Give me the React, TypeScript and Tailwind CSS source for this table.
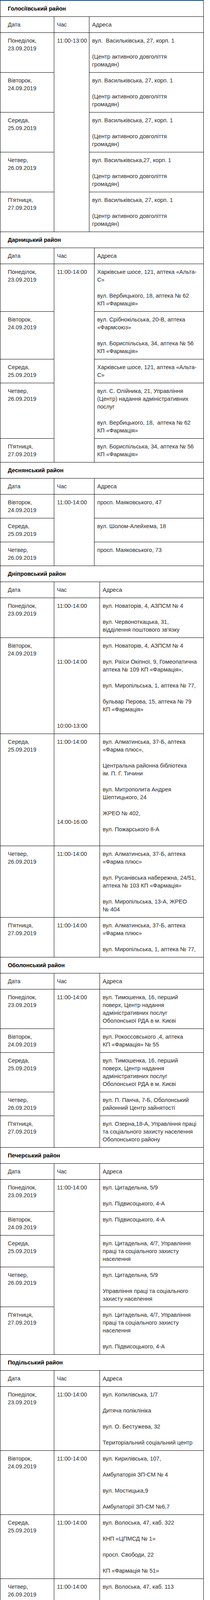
import { Fragment } from "react"

type Row = {
  date: string
  time?: string[]
  addr: string[]
  extra?: boolean
}

type District = {
  name: string
  cols: string
  span?: { rows: number; items: string[] }
  rows: Row[]
}

const MON = "Понеділок,\n23.09.2019"
const TUE = "Вівторок,\n24.09.2019"
const WED = "Середа,\n25.09.2019"
const THU = "Четвер,\n26.09.2019"
const FRI = "П'ятниця,\n27.09.2019"

const WIDE = "grid-cols-[139px_117px_266px]"

const centre = "(Центр активного довголіття\nгромадян)"

const districts: District[] = [
  {
    name: "Голосіївський район",
    cols: "grid-cols-[139px_90px_293px]",
    span: { rows: 5, items: ["11:00-13:00"] },
    rows: [
      { date: MON, addr: ["вул.  Васильківська, 27, корп. 1", centre] },
      { date: TUE, addr: ["вул. Васильківська, 27, корп. 1", centre] },
      { date: WED, addr: ["вул. Васильківська, 27, корп. 1", centre] },
      { date: THU, addr: ["вул. Васильківська,27, корп. 1", centre] },
      { date: FRI, addr: ["вул. Васильківська, 27, корп. 1", centre] },
    ],
  },
  {
    name: "Дарницький район",
    cols: "grid-cols-[139px_103px_280px]",
    span: { rows: 5, items: ["11:00-14:00"] },
    rows: [
      {
        date: MON,
        addr: ["Харківське шосе, 121, аптека «Альта-\nС»", "вул. Вербицького, 18, аптека № 62\nКП «Фармація»"],
      },
      {
        date: TUE,
        addr: ["вул. Срібнокільська, 20-В, аптека\n«Фармсоюз»", "вул. Бориспільська, 34, аптека № 56\nКП «Фармація»"],
      },
      { date: WED, addr: ["Харківське шосе, 121, аптека «Альта-\nС»"] },
      {
        date: THU,
        addr: [
          "вул. С. Олійника, 21, Управління\n(Центр) надання адміністративних\nпослуг",
          "вул. Вербицького, 18,  аптека № 62\nКП «Фармація»",
        ],
      },
      { date: FRI, addr: ["вул. Бориспільська, 34, аптека № 56\nКП «Фармація»"] },
    ],
  },
  {
    name: "Деснянський район",
    cols: "grid-cols-[139px_103px_280px]",
    span: { rows: 3, items: ["11:00-14:00"] },
    rows: [
      { date: TUE, addr: ["просп. Маяковського, 47"] },
      { date: WED, addr: ["вул. Шолом-Алейхема, 18"] },
      { date: THU, addr: ["просп. Маяковського, 73"] },
    ],
  },
  {
    name: "Дніпровський район",
    cols: WIDE,
    rows: [
      {
        date: MON,
        time: ["11:00-14:00"],
        addr: ["вул. Новаторів, 4, АЗПСМ № 4", "вул. Червоноткацька, 31,\nвідділення поштового зв'язку"],
      },
      {
        date: TUE,
        time: ["", "11:00-14:00", "", "", "", "10:00-13:00"],
        addr: [
          "вул. Новаторів, 4, АЗПСМ № 4",
          "вул. Раїси Окіпної, 9, Гомеопатична\nаптека № 109 КП «Фармація»,",
          "вул. Миропільська, 1, аптека № 77,",
          "бульвар Перова, 15, аптека № 79\nКП «Фармація»",
        ],
      },
      {
        date: WED,
        time: ["11:00-14:00", "", "", "", "", "14:00-16:00"],
        extra: true,
        addr: [
          "вул. Алматинська, 37-Б, аптека\n«Фарма плюс»,",
          "Центральна районна бібліотека\nім. П. Г. Тичини",
          "вул. Митрополита Андрея\nШептицького, 24",
          "ЖРЕО № 402,",
          "вул. Пожарського 8-А",
        ],
      },
      {
        date: THU,
        time: ["11:00-14:00"],
        addr: [
          "вул. Алматинська, 37-Б, аптека\n«Фарма плюс»",
          "вул. Русанівська набережна, 24/51,\nаптека № 103 КП «Фармація»",
          "вул. Миропільська, 13-А, ЖРЕО\n№ 404",
        ],
      },
      {
        date: FRI,
        time: ["11:00-14:00"],
        addr: ["вул. Алматинська, 37-Б, аптека\n«Фарма плюс»", "вул. Миропільська, 1, аптека № 77,"],
      },
    ],
  },
  {
    name: "Оболонський район",
    cols: WIDE,
    span: { rows: 5, items: ["11:00-14:00"] },
    rows: [
      {
        date: MON,
        addr: ["вул. Тимошенка, 16, перший\nповерх, Центр надання\nадміністративних послуг\nОболонської РДА в м. Києві"],
      },
      { date: TUE, addr: ["вул. Рокоссовського ,4, аптека\nКП «Фармація» № 55"] },
      {
        date: WED,
        addr: ["вул. Тимошенка, 16, перший\nповерх, Центр надання\nадміністративних послуг\nОболонської РДА в м. Києві"],
      },
      { date: THU, addr: ["вул. П. Панча, 7-Б, Оболонський\nрайонний Центр зайнятості"] },
      {
        date: FRI,
        addr: ["вул. Озерна,18-А, Управління праці\nта соціального захисту населення\nОболонського району"],
      },
    ],
  },
  {
    name: "Печерський район",
    cols: WIDE,
    span: { rows: 5, items: ["11:00-14:00"] },
    rows: [
      { date: MON, addr: ["вул. Цитадельна, 5/9", "вул. Підвисоцького, 4-А"] },
      { date: TUE, addr: ["вул. Підвисоцького, 4-А"] },
      { date: WED, addr: ["вул. Цитадельна, 4/7, Управління\nпраці та соціального захисту\nнаселення"] },
      { date: THU, addr: ["вул. Цитадельна, 5/9", "Управління праці та соціального\nзахисту населення"] },
      {
        date: FRI,
        addr: ["вул. Цитадельна, 4/7, Управління\nпраці та соціального захисту\nнаселення", "вул. Підвисоцького, 4-А"],
      },
    ],
  },
  {
    name: "Подільський район",
    cols: WIDE,
    rows: [
      {
        date: MON,
        time: ["11:00-14:00"],
        addr: ["вул. Копилівська, 1/7", "Дитяча поліклініка", "вул. О. Бестужева, 32", "Територіальний соціальний центр"],
      },
      {
        date: TUE,
        time: ["11:00-14:00"],
        addr: ["вул. Кирилівська, 107,", "Амбулаторія ЗП-СМ № 4", "вул. Мостицька,9", "Амбулаторії ЗП-СМ №6,7"],
      },
      {
        date: WED,
        time: ["11:00-14:00"],
        addr: ["вул. Волоська, 47, каб. 322", "КНП «ЦПМСД № 1»", "просп. Свободи, 22", "КП «Фармація № 51»"],
      },
      {
        date: THU,
        time: ["11:00-14:00"],
        addr: ["вул. Волоська, 47, каб. 113", "просп. Свободи, 22", "КП «Фармація № 51»"],
      },
      {
        date: FRI,
        time: ["11:00-14:00"],
        addr: ["вул. Мостицька, 9, каб. 250", "вул. Полкова,57, АЗП-СМ № 1"],
      },
    ],
  },
  {
    name: "Святошинський район",
    cols: WIDE,
    span: { rows: 3, items: ["", "09:00-12:00", "", "11:00-14:00", "", "09:00-12:00", "11:00-14:00"] },
    rows: [
      { date: MON, addr: ["просп. Перемоги, 97", "просп. Перемоги, 148/1, аптека\n№ 78 КП «Фармація»"] },
      { date: WED, addr: ["просп. Перемоги, 97", "просп. Перемоги, 148/1, аптека\n№ 78 КП «Фармація»"] },
      { date: FRI, addr: ["просп. Перемоги, 97", "просп. Перемоги, 148/1, Аптека\n№78 КП «Фармація»"] },
    ],
  },
  {
    name: "Солом’янський район",
    cols: WIDE,
    span: { rows: 5, items: ["11:00-14:00"] },
    rows: [
      {
        date: MON,
        addr: ["просп. Повітрофлотський, 41,\nСолом'янська РДА", "просп. Комарова, 3, Медмістечко,"],
      },
      {
        date: TUE,
        addr: [
          "просп. Повітрофлотський, 40,\nУправління праці та соціального\nзахисту Солом'янської РДА",
          "вул. Гавела, 83-А, Територіальний\nцентр соціального\nобслуговування Солом'янського\nрайону",
        ],
      },
      {
        date: WED,
        addr: ["вул. Липківського, 27/5, аптека КП\n№ 17,", "просп. Перемоги, 45, аптека КП\n№ 36"],
      },
      { date: THU, addr: ["вул. Солом'янська, 17", "просп. Комарова, 3, Медмістечко"] },
      {
        date: FRI,
        addr: ["просп. Повітрофлотський, 41,\nСолом'янська районна в місті\nКиєві державна адміністрація"],
      },
    ],
  },
  {
    name: "Шевченківський район",
    cols: WIDE,
    rows: [
      {
        date: MON,
        time: ["10:00-13:00"],
        addr: ["вул. Щусєва 2/19 (аптека № 121\nКП «Фармація)", "КНП ЦПМСД № 3"],
      },
      {
        date: TUE,
        time: ["10:00-13:00"],
        addr: [
          "вул. Б. Хмельницького, 24",
          "(Шевченківська районна в місті\nКиєві державна адміністрація),\nКНП ЦПМСД № 1",
        ],
      },
      {
        date: WED,
        time: ["10:00-13:00"],
        addr: ["вул. Січових Стрільців, 10, аптека\n№ 7 КП «Фармація»", "КНП ЦПМСД № 2"],
      },
      {
        date: THU,
        time: ["10:00-13:00"],
        addr: ["вул. Б. Хмельницького, 24,\nШевченківська РДА), КНП ЦПМСД\n№ 3"],
      },
      {
        date: FRI,
        time: ["10:00-13:00"],
        addr: ["вул. Ісаакяна, 2 (аптека № 90\nКП «Фармація)", "КНП ЦПМСД № 1"],
      },
    ],
  },
]

const spanClass: Record<number, string> = {
  3: "row-span-3",
  5: "row-span-5",
}

// one paragraph per item; line breaks are explicit so wrapping matches the page
function Lines({ items }: { items: string[] }) {
  return (
    <div className="flex flex-col gap-[21px]">
      {items.map((t, i) => (
        <p key={i} className="min-h-[20px] whitespace-pre text-[14.6px] leading-[20px]">
          {t}
        </p>
      ))}
    </div>
  )
}

const first = "border-l border-r border-b border-black pl-[19px] py-[10px]"
const cell = "border-r border-b border-black pl-[7px] py-[10px]"

function DistrictTable({ d }: { d: District }) {
  return (
    <div className={`grid ${d.cols}`}>
      <div className={`col-span-3 font-bold text-black ${first}`}>
        <Lines items={[d.name]} />
      </div>
      <div className={first}>
        <Lines items={["Дата"]} />
      </div>
      <div className={cell}>
        <Lines items={["Час"]} />
      </div>
      <div className={cell}>
        <Lines items={["Адреса"]} />
      </div>
      {d.rows.map((r, i) => (
        <Fragment key={i}>
          <div className={first}>
            <Lines items={[r.date]} />
          </div>
          {i === 0 && d.span ? (
            <div className={`${spanClass[d.span.rows]} ${cell}`}>
              <Lines items={d.span.items} />
            </div>
          ) : null}
          {r.time ? (
            <div className={cell}>
              <Lines items={r.time} />
            </div>
          ) : null}
          <div className={r.extra ? "border-r border-b border-black pl-[7px] pt-[10px] pb-[32px]" : cell}>
            <Lines items={r.addr} />
          </div>
        </Fragment>
      ))}
    </div>
  )
}

export default function App() {
  return (
    <div className="w-[538px] bg-white font-['Liberation_Sans',Arial,sans-serif] text-[#2a2a2a]">
      <div className="h-[2px] w-[522px] bg-[#17467a]" />
      {districts.map((d) => (
        <DistrictTable key={d.name} d={d} />
      ))}
      <div className="h-[3px] w-[522px] bg-[#17467a]" />
    </div>
  )
}
